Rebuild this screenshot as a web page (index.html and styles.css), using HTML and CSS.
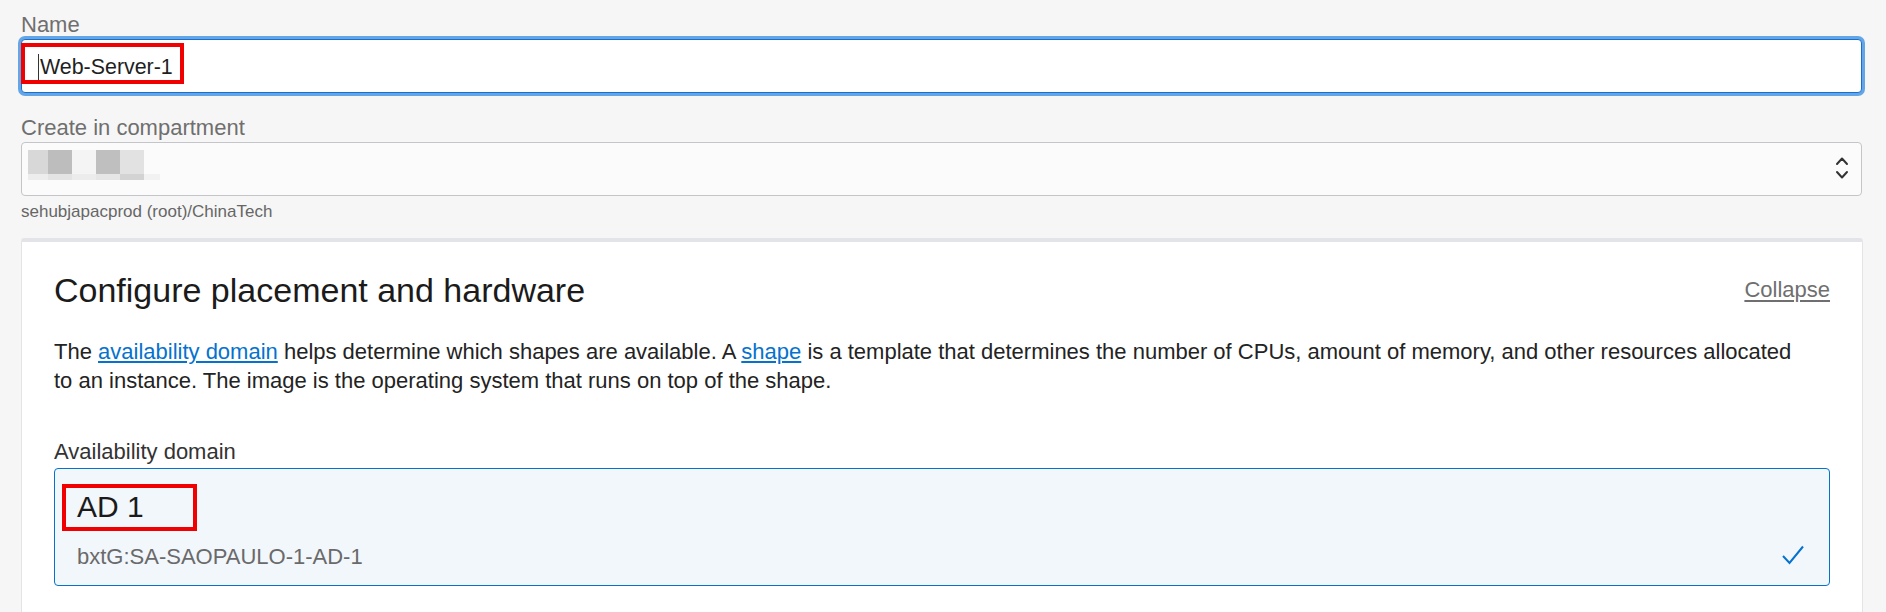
FILE: index.html
```html
<!DOCTYPE html>
<html lang="en">
<head>
<meta charset="utf-8">
<title>Create instance</title>
<link rel="stylesheet" href="styles.css">
</head>
<body>
<div class="page">
  <div class="field">
    <div class="label">Name</div>
    <div class="text-input focused">
      <span class="caret"></span><span class="value">Web-Server-1</span>
      <span class="annot annot-name"></span>
    </div>
  </div>

  <div class="field field-compartment">
    <div class="label">Create in compartment</div>
    <div class="select">
      <svg class="mosaic" width="132" height="30" viewBox="0 0 132 30">
        <rect x="0" y="0" width="20" height="24" fill="#d8d8d8"/>
        <rect x="20" y="0" width="24" height="24" fill="#bdbdbd"/>
        <rect x="44" y="0" width="24" height="24" fill="#f4f4f4"/>
        <rect x="68" y="0" width="24" height="24" fill="#bfbfbf"/>
        <rect x="92" y="0" width="24" height="24" fill="#e2e2e2"/>
        <rect x="0" y="24" width="20" height="6" fill="#ededed"/>
        <rect x="20" y="24" width="24" height="6" fill="#e4e4e4"/>
        <rect x="44" y="24" width="24" height="6" fill="#ececec"/>
        <rect x="68" y="24" width="24" height="6" fill="#e6e6e6"/>
        <rect x="92" y="24" width="24" height="6" fill="#d3d3d3"/>
        <rect x="116" y="24" width="16" height="6" fill="#f2f2f2"/>
      </svg>
      <svg class="chevrons" width="14" height="26" viewBox="0 0 14 26">
        <polyline points="2,9 7,3.5 12,9" fill="none" stroke="#333" stroke-width="2" stroke-linecap="round" stroke-linejoin="round"/>
        <polyline points="2,17 7,22.5 12,17" fill="none" stroke="#333" stroke-width="2" stroke-linecap="round" stroke-linejoin="round"/>
      </svg>
    </div>
    <div class="helper">sehubjapacprod (root)/ChinaTech</div>
  </div>

  <section class="card">
    <div class="card-header">
      <h2 class="card-title">Configure placement and hardware</h2>
      <a class="collapse" href="#">Collapse</a>
    </div>
    <p class="intro">The <a class="link" href="#">availability domain</a> helps determine which shapes are available. A <a class="link" href="#">shape</a> is a template that determines the number of CPUs, amount of memory, and other resources allocated<br>to an instance. The image is the operating system that runs on top of the shape.</p>

    <div class="ad-label">Availability domain</div>
    <div class="ad-option selected">
      <div class="ad-name">AD 1</div>
      <div class="ad-row">
        <span class="ad-id">bxtG:SA-SAOPAULO-1-AD-1</span>
        <svg class="check" width="22" height="20" viewBox="0 0 22 20">
          <polyline points="1,11 7.5,18 21,1.5" fill="none" stroke="#0572ce" stroke-width="2"/>
        </svg>
      </div>
      <span class="annot annot-ad"></span>
    </div>
  </section>
</div>
</body>
</html>
```

FILE: styles.css
```css
html, body {
  margin: 0;
  padding: 0;
  overflow: hidden;
  height: 612px;
}

body {
  background: #f6f6f6;
  font-family: "Liberation Sans", Arial, Helvetica, sans-serif;
  color: #222;
}

.page {
  padding: 10px 23px 0 21px;
}

.label {
  font-size: 22px;
  line-height: 29px;
  color: #6f6f6f;
}

.field-compartment {
  margin-top: 20px;
}

.text-input {
  position: relative;
  box-sizing: border-box;
  height: 54px;
  border: 1px solid #1a6fcc;
  border-radius: 4px;
  background: #fff;
  box-shadow: 0 0 0 3px #63a6e8;
  display: flex;
  align-items: center;
  padding: 3px 0 0 16px;
  margin-right: 1px;
}

.caret {
  display: inline-block;
  width: 1px;
  height: 27px;
  background: #333;
  margin-right: 1px;
}

.value {
  font-size: 21.4px;
  color: #1f1f1f;
}

.annot {
  position: absolute;
  box-sizing: border-box;
  border: 4px solid #f00000;
}

.annot-name {
  left: -1px;
  top: 3px;
  width: 163px;
  height: 41px;
}

.select {
  box-sizing: border-box;
  height: 54px;
  border: 1px solid #c3c5c9;
  border-radius: 4px;
  background: #fbfbfb;
  display: flex;
  align-items: flex-start;
  justify-content: space-between;
  padding: 7px 12px 0 6px;
  margin-right: 1px;
}

.chevrons {
  margin-top: 5px;
}

.helper {
  font-size: 17px;
  line-height: 20px;
  color: #666;
  margin-top: 6px;
}

.card {
  margin-top: 16px;
  background: #fff;
  border-top: 4px solid #e3e4e8;
  border-left: 1px solid #e4e4e6;
  border-right: 1px solid #e4e4e6;
  border-radius: 3px 3px 0 0;
  padding: 28px 32px 40px 32px;
}

.card-header {
  display: flex;
  justify-content: space-between;
  align-items: center;
}

.card-title {
  margin: 0;
  font-size: 34px;
  line-height: 40px;
  font-weight: normal;
  color: #1b1b1b;
}

.collapse {
  font-size: 22px;
  line-height: 28px;
  color: #6f6f6f;
  text-decoration: underline;
  text-underline-offset: 3px;
}

.intro {
  margin: 27px 0 0;
  font-size: 22px;
  line-height: 29px;
  color: #232323;
  white-space: nowrap;
}

.link {
  color: #0572ce;
  text-decoration: underline;
}

.ad-label {
  margin-top: 43px;
  font-size: 22px;
  line-height: 28px;
  color: #333;
}

.ad-option {
  position: relative;
  margin-top: 2px;
  box-sizing: border-box;
  height: 118px;
  border: 1px solid #0572ce;
  border-radius: 4px;
  background: #f2f7fc;
  padding: 20px 25px 0 22px;
}

.ad-name {
  font-size: 30px;
  line-height: 36px;
  color: #1b1b1b;
}

.ad-row {
  margin-top: 18px;
  display: flex;
  justify-content: space-between;
  align-items: center;
}

.ad-id {
  font-size: 22px;
  line-height: 28px;
  color: #6a6a6a;
}

.check {
  margin-top: -4px;
}

.annot-ad {
  left: 7px;
  top: 15px;
  width: 135px;
  height: 47px;
}
```
